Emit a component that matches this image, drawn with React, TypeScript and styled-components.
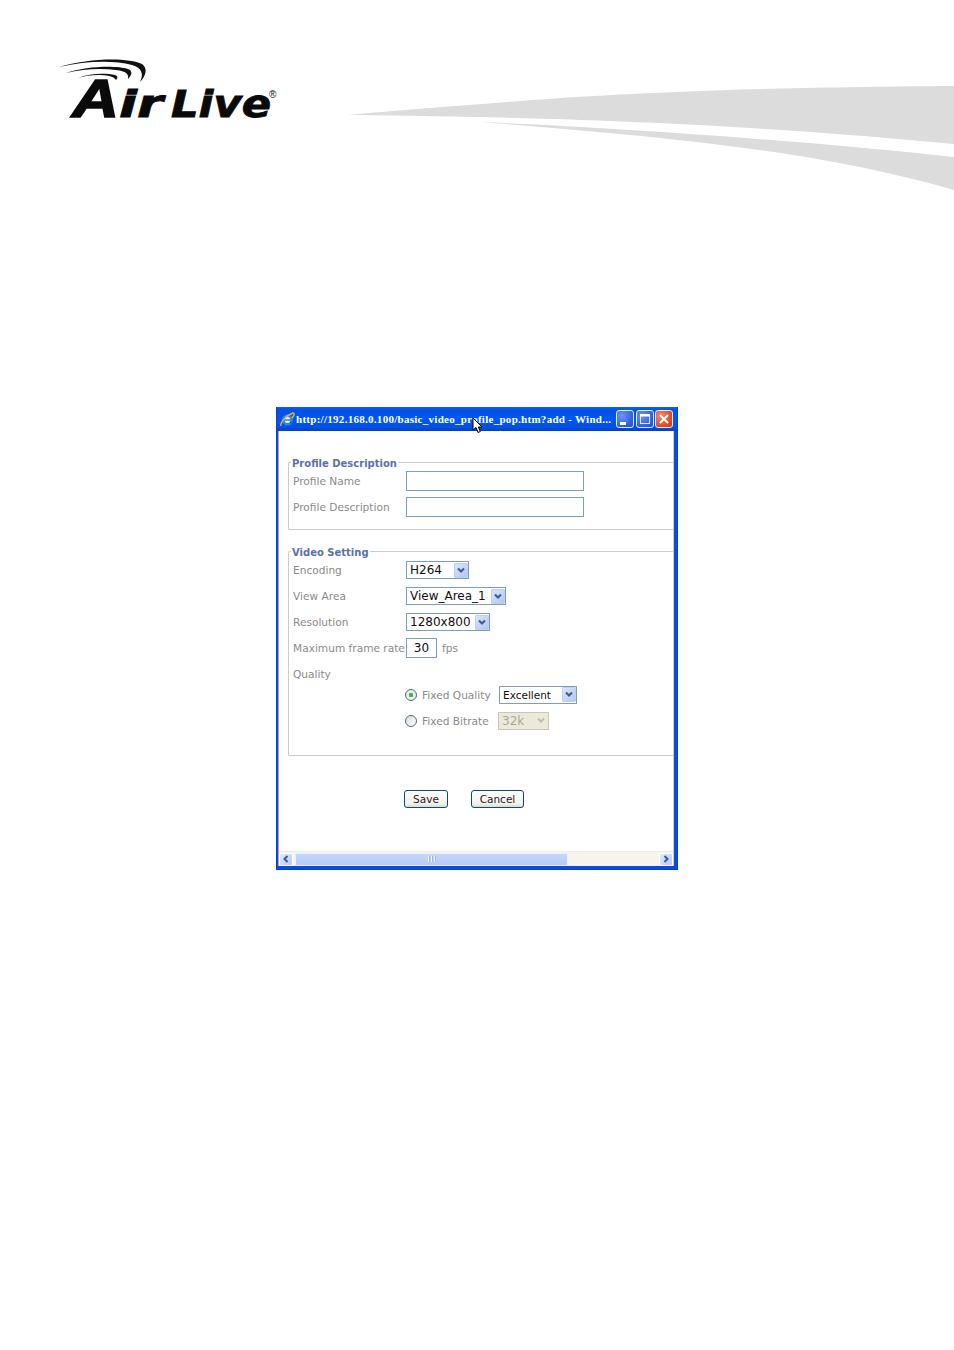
import React from "react";
import styled, { createGlobalStyle } from "styled-components";

const Global = createGlobalStyle`
  html, body { margin: 0; padding: 0; background: #fff; }
  body { font-family: "DejaVu Sans", Verdana, sans-serif; }
`;

const Page = styled.div`
  position: relative;
  width: 954px;
  height: 1350px;
  overflow: hidden;
  background: #fff;
`;

const Header = styled.header`
  display: flex;
  align-items: flex-start;
  height: 190px;
  padding: 58px 0 0 58px;
  box-sizing: border-box;
`;

const Logo = styled.svg`
  flex: none;
  display: block;
  width: 222px;
  height: 62px;
  overflow: visible;
`;

const Swoosh = styled.svg`
  flex: none;
  display: block;
  width: 606px;
  height: 105px;
  margin: 27px 0 0 68px;
`;

const Window = styled.div`
  position: relative;
  width: 402px;
  height: 463px;
  margin: 217px 0 0 276px;
  box-sizing: border-box;
  display: flex;
  flex-direction: column;
  background: #0a4be0;
  border: 1px solid #0a3fc8;
  border-top: none;
`;

const TitleBar = styled.div`
  flex: none;
  height: 24px;
  display: flex;
  align-items: center;
  padding: 0 4px 0 3px;
  background: linear-gradient(180deg, #0a62e6 0%, #0350e8 14%, #0257f2 50%, #0350e4 85%, #0340c4 100%);
`;

const TitleText = styled.span`
  flex: 1;
  min-width: 0;
  margin-left: 1px;
  color: #fff;
  font: bold 11px/24px "Liberation Serif", serif;
  letter-spacing: 0.28px;
  white-space: nowrap;
  overflow: hidden;
`;

const WinButton = styled.div<{ $close?: boolean }>`
  flex: none;
  width: 18px;
  height: 18px;
  margin-left: 1.5px;
  box-sizing: border-box;
  border: 1px solid #e4ecff;
  border-radius: 3px;
  display: flex;
  align-items: center;
  justify-content: center;
  background: ${(p) =>
    p.$close
      ? "radial-gradient(circle at 30% 30%, #ee8a68, #dc4a24 70%, #c83c18)"
      : "radial-gradient(circle at 30% 30%, #6f94f0, #2c5ee0 70%, #2350d0)"};
`;

const Body = styled.div`
  flex: 1;
  min-height: 0;
  margin: 0 3px 3px 1px;
  display: flex;
  flex-direction: column;
  background: #fff;
  border-left: 1px solid #b0ada0;
  border-right: 1px solid #d4d0c8;
`;

const Content = styled.div`
  flex: 1;
  min-height: 0;
  padding: 23px 0 0 9px;
`;

const Group = styled.fieldset<{ $height: number; $mb: number }>`
  display: block;
  box-sizing: border-box;
  height: ${(p) => p.$height}px;
  margin: 0 0 ${(p) => p.$mb}px;
  padding: 0 0 0 4px;
  min-width: 0;
  border: 1px solid #cbcbcb;
  border-right: none;
  border-radius: 2px 0 0 2px;
`;

const Legend = styled.legend`
  margin-left: -2px;
  padding: 4px 1px 0 1px;
  color: #5a72aa;
  font: bold 10px/12px "DejaVu Sans", sans-serif;
`;

const Rows = styled.div<{ $top: number }>`
  display: flex;
  flex-direction: column;
  gap: 6px;
  margin-top: ${(p) => p.$top}px;
`;

const Row = styled.div<{ $h?: number }>`
  display: flex;
  align-items: center;
  height: ${(p) => p.$h ?? 20}px;
`;

const Label = styled.label`
  flex: none;
  width: 113px;
  color: #8a8a8a;
  font-size: 10.6px;
  white-space: nowrap;
`;

const TextBox = styled.div<{ $w: number; $center?: boolean }>`
  box-sizing: border-box;
  width: ${(p) => p.$w}px;
  height: 20px;
  border: 1px solid #7f9db9;
  background: #fff;
  color: #111;
  font-size: 12px;
  line-height: 18px;
  text-align: ${(p) => (p.$center ? "center" : "left")};
`;

const Unit = styled.span`
  margin-left: 5px;
  color: #8a8a8a;
  font-size: 10.6px;
`;

const Select = styled.div<{ $w: number; $disabled?: boolean; $small?: boolean }>`
  box-sizing: border-box;
  width: ${(p) => p.$w}px;
  height: 18px;
  display: flex;
  align-items: center;
  justify-content: space-between;
  padding: 0 0 0 3px;
  border: 1px solid ${(p) => (p.$disabled ? "#c9c7ba" : "#7f9db9")};
  background: ${(p) => (p.$disabled ? "#ece9d8" : "#fff")};
  color: ${(p) => (p.$disabled ? "#aca899" : "#111")};
  font-size: ${(p) => (p.$small ? 10.5 : 12)}px;
  white-space: nowrap;
`;

const Arrow = styled.span<{ $disabled?: boolean }>`
  flex: none;
  width: 14px;
  height: 15px;
  display: flex;
  align-items: center;
  justify-content: center;
  border-radius: 1px;
  background: ${(p) =>
    p.$disabled ? "#ece9d8" : "linear-gradient(135deg, #dbe5fb, #b3c7f3)"};
  border: ${(p) => (p.$disabled ? "none" : "1px solid #bccff5")};
  box-sizing: border-box;
`;

const QualityRows = styled.div`
  display: flex;
  flex-direction: column;
  gap: 7px;
  margin: 1px 0 0 112px;
`;

const QualityRow = styled.div`
  display: flex;
  align-items: center;
  height: 19px;
`;

const Radio = styled.span<{ $on?: boolean }>`
  flex: none;
  width: 12px;
  height: 12px;
  box-sizing: border-box;
  border: 1px solid #4a6c94;
  border-radius: 50%;
  background: ${(p) =>
    p.$on
      ? "radial-gradient(circle, #3cb54a 0 2px, #eef0ee 2.5px, #e4e4dc 100%)"
      : "linear-gradient(135deg, #dcdcd4, #fff)"};
`;

const RadioLabel = styled.span<{ $w: number }>`
  flex: none;
  width: ${(p) => p.$w}px;
  margin-left: 5px;
  color: #8a8a8a;
  font-size: 10.6px;
  white-space: nowrap;
`;

const Actions = styled.div`
  display: flex;
  gap: 23px;
  margin: 34px 0 0 116px;
`;

const Button = styled.button<{ $w: number }>`
  width: ${(p) => p.$w}px;
  height: 18px;
  padding: 0;
  border: 1px solid #0a4a7c;
  border-radius: 3px;
  background: linear-gradient(180deg, #fff, #f2f1ea 80%, #dcd8cc);
  color: #222;
  font: 10.5px/15px "DejaVu Sans", sans-serif;
`;

const ScrollBar = styled.div`
  flex: none;
  height: 14px;
  display: flex;
  align-items: center;
  background: #f6f4ec;
  border-top: 1px solid #ecebe2;
`;

const ScrollBtn = styled.div`
  flex: none;
  width: 14px;
  height: 13px;
  box-sizing: border-box;
  display: flex;
  align-items: center;
  justify-content: center;
  border: 1px solid #fff;
  border-radius: 2px;
  background: linear-gradient(135deg, #e0e8fc, #b8ccf6);
`;

const Thumb = styled.div`
  flex: none;
  width: 273px;
  height: 13px;
  margin-left: 2px;
  box-sizing: border-box;
  display: flex;
  align-items: center;
  justify-content: center;
  gap: 1px;
  border: 1px solid #eaf0ff;
  border-radius: 2px;
  background: linear-gradient(180deg, #c4d6fb, #b6cbf8);
`;

const Grip = styled.i`
  width: 1px;
  height: 6px;
  background: #eef3ff;
  box-shadow: 1px 0 0 #9db4e4;
  margin-right: 1px;
`;

const ScrollSpace = styled.div`
  flex: 1;
`;

const Cursor = styled.svg`
  position: absolute;
  left: 195px;
  top: 10px;
  width: 11px;
  height: 17px;
`;

const Chevron = ({ color = "#3a5a94" }: { color?: string }) => (
  <svg width="8" height="7" viewBox="0 0 8 7">
    <path d="M1 1.5 L4 4.5 L7 1.5" fill="none" stroke={color} strokeWidth="2" />
  </svg>
);

const DropDown = ({ w, text, disabled, small }: { w: number; text: string; disabled?: boolean; small?: boolean }) => (
  <Select $w={w} $disabled={disabled} $small={small}>
    <span>{text}</span>
    <Arrow $disabled={disabled}>
      <Chevron color={disabled ? "#c0bdae" : "#3a5a94"} />
    </Arrow>
  </Select>
);

export default function App() {
  return (
    <Page>
      <Global />
      <Header>
        <Logo viewBox="0 0 222 62">
          <path d="M1 9 C30 0 70 -1 84 6 C90 10 88 18 82 24 C86 16 84 10 74 7 C55 2 28 3 1 9Z" fill="#111" />
          <path d="M8 15 C28 8 58 7 70 11 C75 13 74 17 70 21 C71 16 68 13 58 12 C42 10 25 11 8 15Z" fill="#111" />
          <path d="M20 20 C32 15 48 15 57 17 C60 18 60 20 58 22 C56 18 48 17 40 17 C33 17 26 18 20 20Z" fill="#111" />
          <g fill="#0a0a0a" stroke="#0a0a0a" fontFamily="'DejaVu Sans', sans-serif" fontWeight="bold" fontStyle="italic">
            <text x="14" y="59" fontSize="54" strokeWidth="1.6" fontFamily="'Liberation Sans', sans-serif" textLength="47" lengthAdjust="spacingAndGlyphs">A</text>
            <text x="61" y="59" fontSize="38" strokeWidth="0.9" textLength="44" lengthAdjust="spacingAndGlyphs">ir</text>
            <text x="113" y="59" fontSize="38" strokeWidth="0.9" textLength="100" lengthAdjust="spacingAndGlyphs">Live</text>
          </g>
          <text x="211" y="40" fontSize="10" fill="#111" fontFamily="'Liberation Sans', sans-serif">®</text>
        </Logo>
        <Swoosh viewBox="0 0 606 105">
          <path d="M0 30 C40 26 80 23 121 20 C220 12 330 3 606 1 L606 59 C462 46 305 33 0 30Z" fill="#dcdcdc" />
          <path d="M133 37 C260 42 462 56 606 72 L606 105 C470 66 330 53 133 37Z" fill="#dcdcdc" />
        </Swoosh>
      </Header>

      <Window>
        <TitleBar>
          <svg width="15" height="15" viewBox="0 0 15 15" style={{ flex: "none" }}>
            <circle cx="7.5" cy="8" r="4.2" fill="#e8f2fc" stroke="#2f86e0" strokeWidth="2.6" />
            <path d="M4 8 H11.5" stroke="#2f86e0" strokeWidth="1.6" />
            <path d="M10 10.5 H13" stroke="#0350e8" strokeWidth="1.4" />
            <path d="M1 14 C0 10 7 3 13 1 C15 1 14 4 12 6" fill="none" stroke="#e8b23c" strokeWidth="1.4" />
          </svg>
          <TitleText>http://192.168.0.100/basic_video_profile_pop.htm?add - Wind...</TitleText>
          <WinButton>
            <svg width="14" height="14" viewBox="0 0 14 14"><rect x="2" y="10" width="6" height="3" fill="#fff" /></svg>
          </WinButton>
          <WinButton>
            <svg width="14" height="14" viewBox="0 0 14 14"><rect x="2.5" y="2.5" width="9" height="9" fill="none" stroke="#dfe8ff" /><rect x="2" y="2" width="10" height="2.5" fill="#fff" /></svg>
          </WinButton>
          <WinButton $close>
            <svg width="14" height="14" viewBox="0 0 14 14"><path d="M3 3 L11 11 M11 3 L3 11" stroke="#fff" strokeWidth="2" /></svg>
          </WinButton>
        </TitleBar>
        <Cursor viewBox="0 0 11 17">
          <path d="M1 1 V13 L4 10.5 L6 15.5 L8.3 14.5 L6.3 10 H10 Z" fill="#fff" stroke="#000" strokeWidth="1" />
        </Cursor>
        <Body>
          <Content>
            <Group $height={76} $mb={13}>
              <Legend>Profile Description</Legend>
              <Rows $top={1}>
                <Row><Label>Profile Name</Label><TextBox $w={178} /></Row>
                <Row><Label>Profile Description</Label><TextBox $w={178} /></Row>
              </Rows>
            </Group>
            <Group $height={213} $mb={0}>
              <Legend>Video Setting</Legend>
              <Rows $top={1}>
                <Row><Label>Encoding</Label><DropDown w={63} text="H264" /></Row>
                <Row><Label>View Area</Label><DropDown w={100} text="View_Area_1" /></Row>
                <Row><Label>Resolution</Label><DropDown w={84} text="1280x800" /></Row>
                <Row>
                  <Label>Maximum frame rate</Label>
                  <TextBox $w={31} $center>30</TextBox>
                  <Unit>fps</Unit>
                </Row>
                <Row><Label>Quality</Label></Row>
              </Rows>
              <QualityRows>
                <QualityRow>
                  <Radio $on />
                  <RadioLabel $w={77}>Fixed Quality</RadioLabel>
                  <DropDown w={78} text="Excellent" small />
                </QualityRow>
                <QualityRow>
                  <Radio />
                  <RadioLabel $w={76}>Fixed Bitrate</RadioLabel>
                  <DropDown w={51} text="32k" disabled />
                </QualityRow>
              </QualityRows>
            </Group>
            <Actions>
              <Button $w={44}>Save</Button>
              <Button $w={53}>Cancel</Button>
            </Actions>
          </Content>
          <ScrollBar>
            <ScrollBtn>
              <svg width="8" height="8" viewBox="0 0 8 8"><path d="M5.5 1 L2.5 4 L5.5 7" fill="none" stroke="#3a5a94" strokeWidth="2" /></svg>
            </ScrollBtn>
            <Thumb><Grip /><Grip /><Grip /></Thumb>
            <ScrollSpace />
            <ScrollBtn>
              <svg width="8" height="8" viewBox="0 0 8 8"><path d="M2.5 1 L5.5 4 L2.5 7" fill="none" stroke="#3a5a94" strokeWidth="2" /></svg>
            </ScrollBtn>
          </ScrollBar>
        </Body>
      </Window>
    </Page>
  );
}
